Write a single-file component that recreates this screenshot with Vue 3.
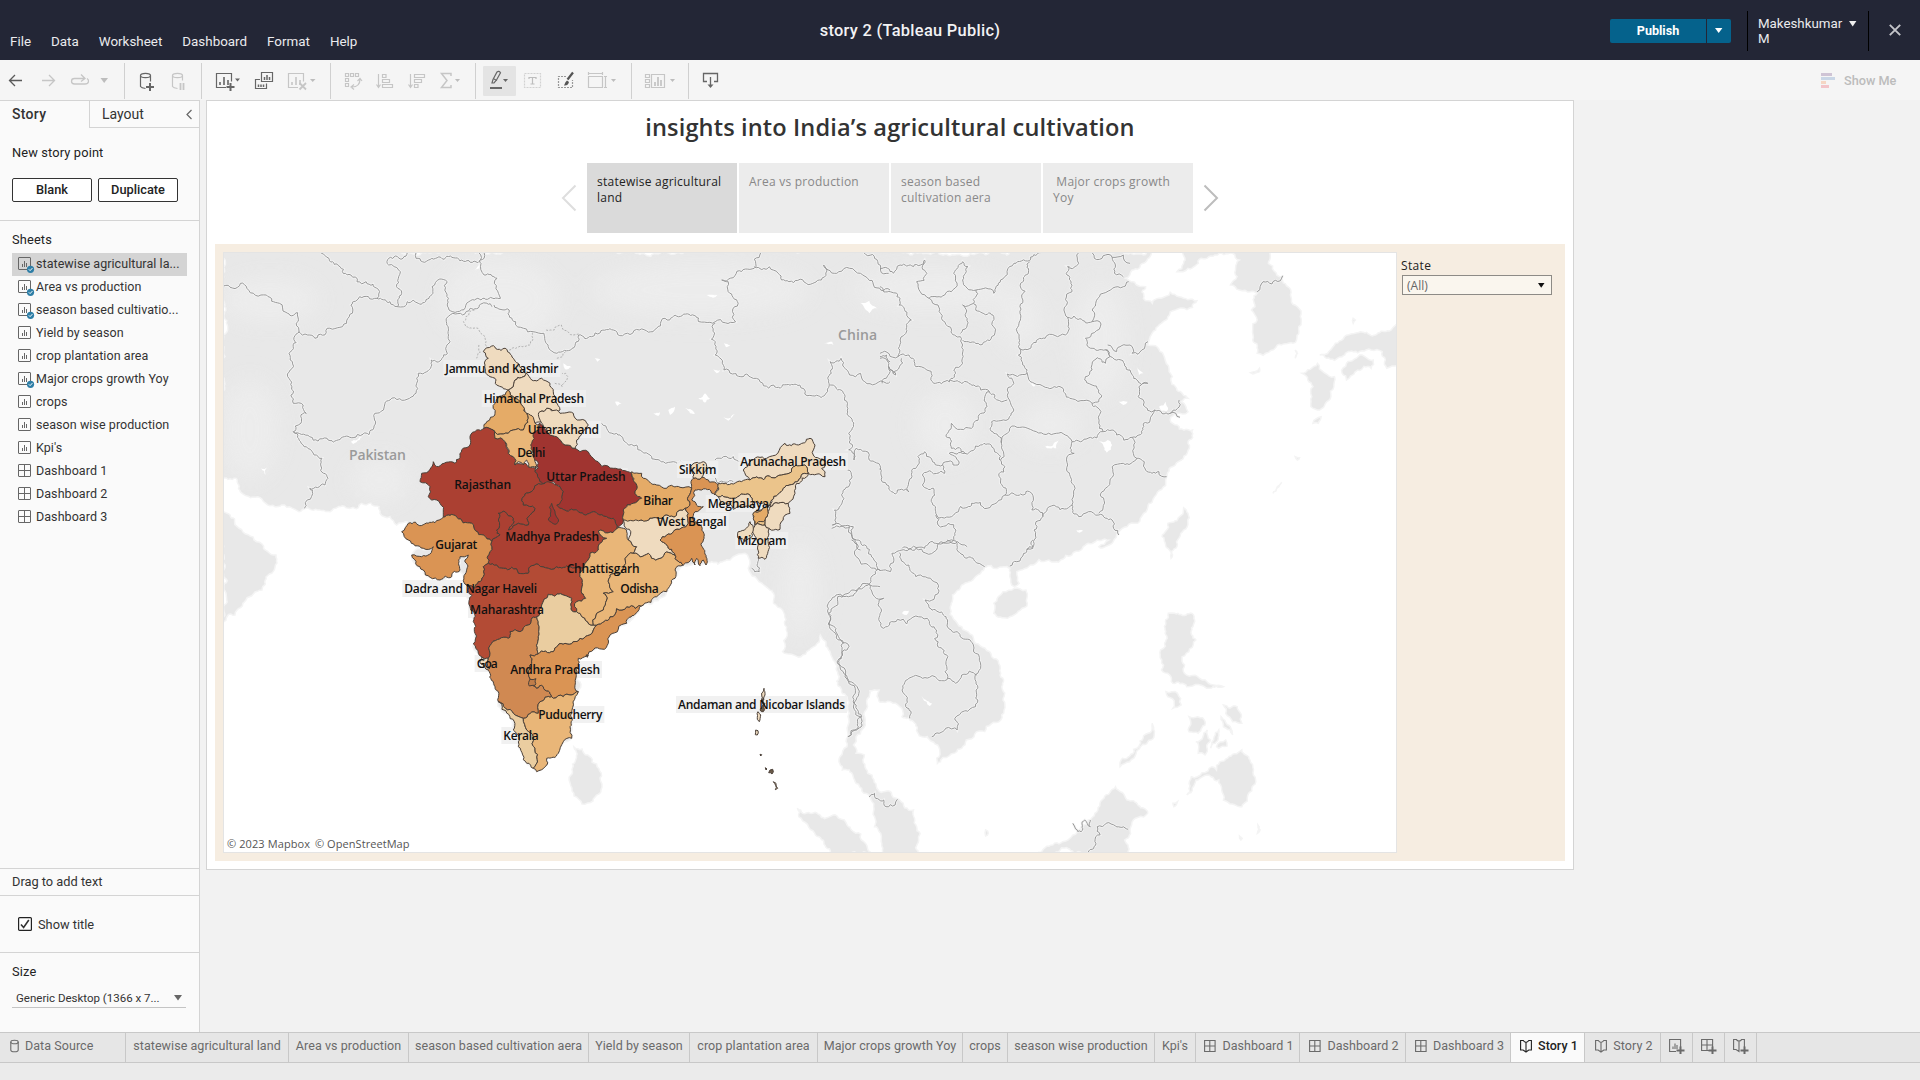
<script setup>
const menus = ['File', 'Data', 'Worksheet', 'Dashboard', 'Format', 'Help']

const sheets = [
  { name: 'statewise agricultural la...', used: true, selected: true },
  { name: 'Area vs production', used: true },
  { name: 'season based cultivatio...', used: true },
  { name: 'Yield by season' },
  { name: 'crop plantation area' },
  { name: 'Major crops growth Yoy', used: true },
  { name: 'crops' },
  { name: 'season wise production' },
  { name: "Kpi's" },
  { name: 'Dashboard 1', dash: true },
  { name: 'Dashboard 2', dash: true },
  { name: 'Dashboard 3', dash: true },
]

const points = [
  { text: 'statewise agricultural land', active: true },
  { text: 'Area vs production' },
  { text: 'season based cultivation aera' },
  { text: '\u00a0Major crops growth Yoy' },
]

const tabs = [
  { name: 'Data Source', icon: 'db', w: 126 },
  { name: 'statewise agricultural land', w: 163 },
  { name: 'Area vs production', w: 120 },
  { name: 'season based cultivation aera', w: 180 },
  { name: 'Yield by season', w: 101 },
  { name: 'crop plantation area', w: 128 },
  { name: 'Major crops growth Yoy', w: 145 },
  { name: 'crops', w: 45 },
  { name: 'season wise production', w: 147 },
  { name: "Kpi's", w: 41 },
  { name: 'Dashboard 1', icon: 'dash', w: 104 },
  { name: 'Dashboard 2', icon: 'dash', w: 106 },
  { name: 'Dashboard 3', icon: 'dash', w: 105 },
  { name: 'Story 1', icon: 'story', w: 74, active: true },
  { name: 'Story 2', icon: 'story', w: 76 },
  { name: '', icon: 'addsheet', w: 32 },
  { name: '', icon: 'adddash', w: 32 },
  { name: '', icon: 'addstory', w: 32 },
]

// Survey grids: origin and scale that turn traced points into map units.
const grids = {
  a: [380, 330, 1 / 3, 1 / 3],
  b: [210, 230, 1 / 2.306, 1 / 3],
  c: [880, 230, 1 / 2.24, 1 / 3],
  d: [700, 540, 1 / 2.178, 1 / 3],
  p: [0, 0, 1, 1],
}

// "b:1,2 3,4 c:5,6" switches grid at each prefix.
function parse(str) {
  let g = grids.p
  return str.trim().split(/\s+/).map((tok) => {
    if (tok[1] === ':') {
      g = grids[tok[0]]
      tok = tok.slice(2)
    }
    const [x, y] = tok.split(',').map(Number)
    return [g[0] + x * g[2], g[1] + y * g[3]]
  })
}

function noise(a, b) {
  const s = Math.sin(a[0] * 12.9898 + a[1] * 78.233 + b[0] * 37.719 + b[1] * 11.17) * 43758.5453
  return (s - Math.floor(s)) * 2 - 1
}

// Midpoint displacement; endpoints are ordered so neighbours share the same edge.
function split(a, b, amp, out) {
  const len = Math.hypot(b[0] - a[0], b[1] - a[1])
  if (len < 3.2) {
    out.push(b)
    return
  }
  const fwd = a[0] < b[0] || (a[0] === b[0] && a[1] < b[1])
  const [p, q] = fwd ? [a, b] : [b, a]
  const k = noise(p, q) * amp * Math.min(len, 16)
  const m = [
    (p[0] + q[0]) / 2 - ((q[1] - p[1]) / len) * k,
    (p[1] + q[1]) / 2 + ((q[0] - p[0]) / len) * k,
  ]
  split(a, m, amp, out)
  split(m, b, amp, out)
}

function line(str, closed = false, amp = 0.2) {
  const pts = parse(str)
  if (closed) pts.push(pts[0])
  const out = [pts[0]]
  for (let i = 1; i < pts.length; i++) split(pts[i - 1], pts[i], amp, out)
  return 'M' + out.map((p) => p[0].toFixed(1) + ' ' + p[1].toFixed(1)).join('L') + (closed ? 'Z' : '')
}

const land = [
  'p:222,250 1152,250 c:590,100 565,120 550,145 575,165 595,170 590,205 610,220 630,205 650,187 670,200 710,212 700,232 650,245 630,280 605,320 600,345 635,375 655,440 665,480 690,505 675,515 690,545 665,550 650,570 665,585 700,600 690,640 675,690 655,710 640,750 615,800 600,830 570,880 530,915 520,940 490,950 d:890,0 830,30 810,45 760,60 720,75 690,95 695,130 685,140 675,110 675,85 620,82 600,110 570,135 550,165 545,205 570,260 600,310 635,350 655,400 660,480 655,540 620,575 580,600 570,625 540,650 517,670 518,615 495,590 475,580 465,545 440,530 435,500 415,485 392,487 390,450 370,452 365,475 360,540 340,590 340,640 358,645 365,700 385,745 415,755 435,780 465,810 472,860 475,945 400,945 395,890 380,860 378,800 370,770 340,730 325,690 310,690 305,650 320,620 322,590 325,520 305,440 295,370 280,330 262,285 255,310 220,350 180,335 188,270 180,210 160,190 160,160 120,110 105,85 a:1110,700 1095,670 1060,680 1050,690 975,700 910,705 885,745 860,785 800,820 740,880 690,915 680,945 640,960 620,978 590,985 585,1030 595,1085 575,1150 575,1225 535,1270 500,1285 495,1310 470,1325 440,1300 415,1250 400,1200 355,1115 345,1070 320,1010 295,970 285,910 270,830 255,760 240,690 240,720 180,750 130,720 95,675 160,650 130,655 85,630 65,605 85,580 50,585 30,560 0,550 b:390,830 350,820 290,835 215,838 165,825 150,830 110,800 70,785 60,745 25,737',
  'p:222,512 230,515 243,532 262,544 276,555 277,563 266,577 262,590 246,600 235,615 222,622',
  'c:675,60 680,100 665,125 690,115 715,88 750,75 790,70 805,90 800,140 785,165 805,180 830,185 845,190 840,230 832,240 845,270 835,330 845,370 890,345 925,340 938,290 935,230 920,180 900,140 870,100 875,60',
  'c:945,430 980,400 1018,440 1010,500 985,540 965,530 970,470',
  'c:985,375 1020,340 1055,312 1110,315 1160,280 1160,405 1135,415 1125,365 1100,360 1060,365 1035,380 1000,385',
  'c:1045,400 1080,375 1105,390 1100,415 1070,420 1045,450 1035,430',
  'c:830,428 850,415 850,425 835,432',
  'c:680,833 690,850 680,900 665,950 652,985 645,955 632,920 645,880',
  'd:640,190 660,155 710,150 712,175 690,220 670,235 640,220',
  'd:1020,220 1075,225 1080,300 1050,350 1055,400 1100,420 1140,440 1110,445 1060,440 1030,430 1005,390 1003,330 1015,300',
  'd:1015,455 1040,460 1048,495 1030,505',
  'd:985,550 990,575 950,640 915,680 920,655 965,595',
  'd:1060,765 1070,710 1115,680 1125,690 1180,630 1198,660 1210,720 1195,760 1180,800 1140,780 1130,720 1095,710 1080,720',
  'd:1065,530 1100,545 1085,580 1065,575',
  'd:1105,570 1112,600 1100,645 1085,640 1080,605',
  'd:1140,495 1170,500 1180,550 1160,545 1145,520',
  'd:1135,530 1155,560 1160,585 1140,560',
  'd:1120,590 1130,570 1122,610 1112,625',
  'd:1125,620 1145,600 1148,618 1130,625',
  'd:725,945 790,905 830,860 860,820 880,775 905,740 930,780 975,820 940,855 925,900 930,945',
  'd:212,805 240,820 290,825 330,870 360,910 372,945 290,945 250,880 215,830',
  'p:574,747 582,749 592,762 600,778 601,790 593,801 582,804 574,796 571,775',
  'c:1060,265 1065,270 1060,280', 'c:930,360 935,370 930,385', 'c:880,790 900,757 890,770', 'c:930,680 940,683 935,690', 'c:970,580 988,560 982,580',
  'd:1215,855 1220,870 1214,880', 'd:622,870 628,880 622,888', 'd:1175,888 1181,895 1178,900', 'd:1030,790 1040,785 1032,800',
]

const lakes = [
  'a:955,205 975,190 990,205 975,218', 'a:865,240 885,230 870,255', 'a:1030,262 1065,252 1045,272', 'a:915,235 935,240 950,252 930,250',
  'a:1000,118 1020,120 1010,130', 'a:705,215 725,220 712,228', 'a:820,250 840,247 835,258', 'a:550,100 575,112 555,118',
  'b:1500,220 1520,212 1538,235 1520,250', 'b:1145,195 1170,195 1160,203', 'b:1185,340 1200,345 1190,352', 'b:118,715 132,712 128,735', 'b:325,635 352,620 345,630 330,642',
  'b:610,120 620,100 622,115', 'b:887,385 900,388 893,395', 'b:1415,340 1435,335 1438,345',
  'c:575,410 590,430 580,435', 'c:535,515 555,515 545,525', 'c:625,530 640,515 645,540 630,545', 'c:490,635 510,630 520,645 508,668', 'c:370,650 400,630 395,655 380,655', 'c:440,900 455,902 447,908', 'c:330,455 355,462 345,470',
  'd:482,462 505,490 500,498 485,475', 'd:440,220 455,212 450,225',
]

const borders = [
  'b:255,68 300,110 325,135 360,155 388,178 385,205',
  'b:31,168 70,160 85,175 130,195 160,220 175,247 202,248 205,300 182,370 185,420 192,520 215,525 222,550 192,605',
  'b:205,305 225,315 242,325 270,295 315,280 325,225 345,200 385,205 415,215 432,230 455,215 480,220 505,205 512,170 530,147 547,155 550,205 560,245 580,240 610,210 640,208 670,205 662,145 632,135 625,100 620,68',
  'b:432,230 442,190 430,170 435,120 412,105 412,85 445,85 455,68',
  'b:475,68 475,85 540,88 600,97 632,85 632,68',
  'b:192,605 230,620 270,625 330,623 375,600 380,550 400,540 415,510 460,505 475,490 480,430 500,425 510,390 535,385 545,350 550,315 545,275 560,250 600,235 650,230',
  'b:192,605 210,640 240,675 258,685 262,730 272,745 265,765 230,775 218,835',
  'b:655,225 690,240 705,275 745,305 770,310 780,350 800,370 835,355 850,315 880,320 900,308 930,300 945,317 990,300 1030,295 1060,270 1120,258 1165,275 1212,275 1205,245 1218,220 1195,185 1195,155 1180,150 1255,115 1270,68',
  'b:1255,110 1290,110 1310,130 1335,155 1375,160 1410,150 1415,105 1450,125 1475,115 1500,130 1530,165 1568,180',
  'b:1508,68 1540,95 1565,130',
  'b:1165,280 1165,375 1185,420 1205,432 1260,445 1300,465 1360,465 1395,498 1420,490 1428,465 1430,395 1455,385 1475,435 1500,430 1510,455 1560,460 1568,455',
  'b:1430,465 1455,480 1470,520 1480,600 1475,625 1485,690 1490,655 1520,690 1545,720',
  'b:1545,380 1560,375 1568,395',
  'a:665,280 710,310 740,340 770,345 810,375 850,395 880,395 915,410',
  'a:975,435 1015,460 1060,455', 'a:1005,390 1030,380 1085,395',
  'b:1470,720 1475,765 1440,840 1435,885 1475,890 1480,920 1500,960',
  'a:1355,595 1420,590 1430,630 1490,700 1500,720',
  'a:1500,770 1470,765 1430,780 1365,800 1345,850 1390,940 1380,1010 1415,1065 1445,1160 1405,1220',
  'a:1135,685 1138,725 1115,715',
  'c:0,115 30,130 45,105 75,110 100,90 105,130 82,155 90,185 110,205 145,195 160,185 165,130 185,95 197,110 185,150 215,180 255,190 270,150 300,100 335,92 360,68',
  'c:335,95 315,160 320,210 315,265 312,355 330,430 285,432 300,460 285,480 290,510 300,540 290,560 250,575 255,610 272,640 270,690',
  'c:110,205 130,225 145,275 180,320 185,345 185,400 165,420 155,455 210,465 245,485 285,510',
  'c:215,180 210,220 185,225 195,265 180,310', 'c:210,222 255,260 250,320 220,340 185,330',
  'c:0,170 45,205 70,270 45,330 40,380 0,370', 'c:40,380 65,375 80,410 105,420 120,460 155,455',
  'c:0,385 20,400 35,435 20,410 5,460', 'c:30,430 48,385',
  'c:312,355 370,325 415,315 420,262 412,240 430,185 420,110 445,100 445,68',
  'c:420,262 475,275 475,240 500,190 545,170 557,155', 'c:475,275 495,282 460,325 475,355 510,360',
  'c:475,68 480,85 520,82 525,130 545,140', 'c:520,82 545,75 560,100',
  'c:510,345 530,365 560,345 565,370 600,335',
  'c:505,360 515,380 505,400 480,390 475,420 460,440 475,465 490,480 490,515 475,520 425,505 410,475 370,472 330,430',
  'c:510,360 540,390 560,420 575,450 600,460 580,470 590,525 615,540 650,550 670,510', 'c:475,520 495,545 490,580 500,605 430,635 415,615 395,610 350,605 325,592 285,610 272,640',
  'c:500,605 520,600 530,615 565,622 580,615 590,580 605,570 615,540', 'c:565,622 575,685 545,700 520,710 510,770 495,800 490,850', 'c:575,685 595,720 625,725 642,740', 'c:650,550 672,562',
  'c:430,635 435,670 418,720 430,760 430,825 445,860 490,855 520,870 535,915',
  'c:430,825 395,830 365,860 340,840 335,785 280,795 270,760 280,710 270,690',
  'c:245,485 240,530 220,560 205,595 160,580 148,620 160,655 190,670 225,645 255,655 268,690',
  'c:190,670 155,670 175,705 140,705 115,685 100,665 85,705 70,745 65,785 35,792 15,765 0,715',
  'c:140,705 145,730 95,735 95,765 120,775 115,815 125,850 165,855 205,820 240,835 280,795',
  'c:125,855 130,885 170,900 165,920 125,940 100,955 50,955', 'c:365,860 345,900 345,930 330,960', 'c:150,930 195,950',
  'd:330,0 345,20 340,50 370,80 400,90 415,95 418,40 440,30 470,25 515,30 525,5 560,10 575,50 620,80',
  'd:725,0 725,25 705,40 690,65 675,78',
  'd:435,38 455,75 470,110 510,125 520,155 490,180 530,225 560,275 600,340 605,400 600,500 555,535 560,570 535,565 505,590',
  'd:385,90 370,130 330,150 300,170 280,220 325,320 308,380 335,430 340,480 350,530 322,590',
  'd:370,135 380,170 400,175 400,265 430,238 450,252 470,228 495,235 515,270 518,320 540,350 540,410 500,412 460,412 440,450 448,500 457,535',
  'd:540,415 557,430 570,405 603,405',
  'd:368,770 380,760 400,780 405,800 425,795 430,778', 'd:812,850 830,875 838,840 850,860 850,840', 'd:845,937 860,905 865,860 905,858 932,868',
  'c:845,185 858,155 897,152 902,137',
]

const disputed = [
  'b:610,240 590,260 590,290 620,300 635,330 640,350', 'b:690,360 720,350 745,325 745,305', 'b:620,345 615,385', 'b:775,300 810,285 850,312',
  'b:800,385 820,365', 'b:795,460 812,470 820,430 812,430',
]

const states = [
  ['#efdbbf', 'a:310,65 335,48 372,55 400,85 415,100 440,130 405,150 400,170 385,180 350,165 345,145 330,140 315,105 325,85'],
  ['#efdbbf', 'a:440,130 455,150 475,150 485,145 510,160 520,185 525,215 540,240 500,235 480,245 485,275 465,280 435,245 430,230 405,205 385,180 400,170 405,150'],
  ['#e5ab67', 'a:385,180 405,205 430,230 440,250 445,265 435,285 430,300 400,300 385,310 370,312 340,300 312,295 320,275 345,250 345,220 355,200 375,195'],
  ['#ab4032', 'a:312,295 340,300 345,325 375,335 385,370 400,380 405,405 430,400 445,410 470,410 465,425 480,455 500,450 500,455 460,480 430,500 430,525 465,535 445,560 445,585 415,580 385,600 400,565 375,545 355,550 355,570 350,600 360,615 335,635 310,615 275,580 230,562 190,562 170,510 145,500 150,470 120,455 125,430 160,395 175,410 225,400 245,360 270,345 290,300'],
  ['#a03430', 'a:480,280 490,290 505,310 530,320 555,345 585,355 640,385 700,415 755,430 770,465 765,490 785,505 760,520 730,540 730,570 710,597 700,565 660,555 640,545 595,545 580,540 540,535 515,520 530,495 545,500 540,470 520,455 480,455 465,425 475,400 460,380 455,320'],
  ['#e9b678', 'a:340,300 370,312 385,310 400,300 430,300 435,285 445,265 440,250 460,262 465,280 480,285 460,310 455,340 460,380 470,408 445,410 440,390 430,405 415,395 405,405 400,380 385,370 380,350 375,335 345,325'],
  ['#efdbbf', 'a:480,245 500,235 530,240 580,250 600,270 625,285 605,310 590,330 585,355 555,345 530,320 505,310 485,280'],
  ['#ab4032', 'a:520,460 540,470 545,500 530,525 540,535 580,540 595,545 640,545 660,555 700,565 710,597 655,603 680,625 655,660 630,670 615,700 610,715 560,708 540,712 505,715 475,703 450,710 445,730 415,730 395,712 370,715 350,705 325,700 330,665 335,635 360,615 350,600 355,570 355,550 375,545 400,565 385,600 415,580 445,585 445,560 465,535 430,525 430,500 460,480 500,455'],
  ['#a03430', 'a:515,520 505,570 525,583 535,568 520,535'],
  ['#da9454', 'a:85,580 165,578 190,562 230,562 275,580 310,615 335,635 330,665 325,700 310,710 310,740 295,755 285,775 260,765 255,690 265,675 240,680 240,720 215,740 180,750 130,720 95,675 125,680 160,650 130,655 85,630 65,605'],
  ['#b34b35', 'a:325,700 350,705 370,715 395,712 415,730 445,730 450,710 475,703 505,715 540,712 560,708 610,715 600,740 605,790 617,805 590,815 590,845 580,845 575,805 505,793 485,825 480,850 470,860 445,885 420,905 390,905 385,925 335,940 330,970 325,985 305,980 295,970 285,910 270,830 260,765 285,775 295,755 310,740 310,710'],
  ['#d08952', 'a:470,860 475,920 475,972 450,975 455,1000 445,1030 450,1065 490,1070 515,1100 480,1115 475,1150 430,1165 400,1150 355,1115 345,1070 330,1030 325,985 330,970 335,940 385,925 390,905 420,905 445,885'],
  ['#eacda0', 'a:505,793 575,805 580,845 600,850 640,885 650,885 640,900 600,925 555,940 520,965 475,972 475,920 470,860 480,850 485,825'],
  ['#da9454', 'a:450,975 475,972 520,965 555,940 600,925 640,900 650,885 690,860 740,830 790,825 740,880 690,915 685,940 640,960 620,978 595,985 588,1030 595,1085 550,1100 520,1105 515,1100 490,1070 450,1065 445,1030 455,1000'],
  ['#e9b678', 'a:655,603 710,597 730,595 745,630 770,650 760,670 735,685 730,715 690,735 685,755 700,785 670,790 680,810 670,840 640,885 600,850 590,845 590,815 617,805 605,790 600,740 610,715 615,700 630,670 655,660 680,625'],
  ['#e9b678', 'a:760,670 805,670 815,685 840,685 860,665 885,675 910,705 885,720 885,745 860,785 830,800 790,825 740,830 690,860 650,885 640,885 670,840 680,810 670,790 700,785 685,755 690,735 730,715 735,685'],
  ['#efdbbf', 'a:730,570 800,572 845,565 885,560 900,540 915,535 925,550 925,580 880,605 840,630 860,645 885,675 860,665 840,685 815,685 805,670 760,670 770,650 745,630'],
  ['#e5ab67', 'a:755,425 785,430 790,445 830,465 860,475 900,472 935,475 925,500 930,520 915,535 900,540 885,560 845,565 800,572 735,570 730,570 730,540 760,520 785,505 765,490 770,465'],
  ['#da9454', 'a:935,465 940,445 965,442 1015,465 1005,495 965,480 945,480 935,510 970,530 945,545 940,570 965,590 970,630 978,705 970,690 960,707 950,685 945,705 935,685 910,705 885,675 860,645 840,630 880,605 925,580 925,550 915,535 930,520 925,500 935,475'],
  ['#efdbbf', 'a:935,405 970,395 970,435 965,442 940,445'],
  ['#efdbbf', 'a:1090,420 1110,395 1160,385 1215,340 1255,345 1290,325 1305,345 1300,375 1335,390 1325,415 1335,440 1285,430 1275,405 1240,410 1190,440 1110,450'],
  ['#ebc48b', 'a:1015,460 1060,462 1110,450 1190,440 1240,410 1275,405 1285,430 1250,455 1210,475 1175,510 1165,550 1155,585 1125,585 1120,560 1125,545 1165,530 1120,515 1110,495 1060,505 1015,500 1005,490'],
  ['#e5ab67', 'a:1125,545 1170,525 1165,550 1150,575 1125,585 1120,565'],
  ['#efdbbf', 'a:1285,430 1250,460 1245,490 1225,520 1195,520 1170,530 1175,510 1210,475 1250,455'],
  ['#efdbbf', 'a:1015,500 1060,505 1110,495 1120,515 1120,535 1060,538 1020,525'],
  ['#efdbbf', 'a:1170,530 1195,520 1225,520 1230,550 1200,598 1155,585 1165,550'],
  ['#efdbbf', 'a:1125,585 1155,585 1168,595 1165,640 1155,688 1135,685 1135,640 1120,610'],
  ['#efdbbf', 'a:1075,605 1110,575 1120,600 1095,635 1075,625'],
  ['#efdbbf', 'a:305,980 325,985 330,1015 318,1018'],
  ['#eacda0', 'a:355,1115 400,1150 430,1165 440,1200 460,1220 465,1260 460,1315 440,1300 415,1250 400,1200'],
  ['#e9b678', 'a:430,1165 475,1150 480,1115 515,1100 520,1105 550,1100 595,1085 575,1150 570,1190 575,1225 550,1235 535,1270 500,1285 495,1310 470,1325 460,1315 465,1260 460,1220 440,1200'],
  ['#efdbbf', 'a:1152,1075 1155,1095 1148,1120 1145,1095'],
  ['#6b5a48', 'a:1146,1105 1155,1120 1150,1145 1140,1140'],
  ['#efdbbf', 'a:1134,1145 1142,1155 1138,1175 1132,1168'],
  ['#efdbbf', 'a:1127,1200 1134,1202 1132,1215 1126,1214'],
  ['#4a4a4a', 'a:1140,1273 1145,1274 1142,1278'],
  ['#4a4a4a', 'a:1156,1313 1161,1317 1158,1320'],
  ['#6b5a48', 'a:1166,1328 1178,1318 1176,1332'],
  ['#efdbbf', 'a:1180,1355 1188,1360 1193,1375 1186,1379'],
  ['#4a4a4a', 'a:618,975 625,975 622,982'],
  ['#c07d49', 'a:450,1048 468,1046 465,1066 448,1068'],
]

// Label text, left edge, right edge, vertical centre (grid a).
const labels = [
  ['Jammu and Kashmir', 196, 535, 117], ['Himachal Pradesh', 311, 612, 207], ['Uttarakhand', 443, 657, 300],
  ['Delhi', 412, 496, 369], ['Uttar Pradesh', 499, 737, 441], ['Rajasthan', 223, 393, 465], ['Sikkim', 897, 1009, 420],
  ['Arunachal Pradesh', 1081, 1398, 396], ['Bihar', 790, 879, 513], ['Meghalaya', 983, 1167, 522], ['West Bengal', 831, 1040, 576],
  ['Mizoram', 1072, 1219, 633], ['Madhya Pradesh', 376, 657, 621], ['Gujarat', 166, 292, 645], ['Chhattisgarh', 560, 779, 717],
  ['Dadra and Nagar Haveli', 73, 471, 777], ['Odisha', 721, 836, 777], ['Maharashtra', 270, 492, 840], ['Goa', 290, 353, 1002],
  ['Andhra Pradesh', 391, 660, 1020], ['Puducherry', 475, 667, 1155], ['Kerala', 370, 476, 1218], ['Andaman and Nicobar Islands', 894, 1395, 1125],
].map(([t, l, r, y]) => ({ t, x: 380 + l / 3, w: (r - l) / 3, y: 330 + y / 3 }))

const landPath = land.map((s) => line(s, true, 0.22)).join('')
const lakePath = lakes.map((s) => line(s, true, 0.2)).join('')
const borderPath = borders.map((s) => line(s, false, 0.28)).join('')
const disputedPath = disputed.map((s) => line(s, false, 0.26)).join('')
const statePaths = states.map(([fill, s]) => ({ fill, d: line(s, true, 0.24) }))
</script>

<template>
  <div class="app">
    <header class="top">
      <nav class="menu">
        <span v-for="m in menus" :key="m">{{ m }}</span>
      </nav>
      <div class="doc-title">story 2 (Tableau Public)</div>
      <div class="account">
        <div class="publish"><b>Publish</b><i><svg width="8" height="6"><path d="M0 0h7.4L3.7 5z" fill="#fff" /></svg></i></div>
        <div class="user">
          <span>Makeshkumar<br>M</span>
          <svg width="8" height="6"><path d="M0 0h7.4L3.7 5.4z" fill="#eee" /></svg>
        </div>
        <svg class="close" width="12" height="12"><path d="M.8.8l10.4 10.4M11.2.8L.8 11.2" stroke="#c4c5ca" stroke-width="1.9" /></svg>
      </div>
    </header>

    <div class="toolbar">
      <svg viewBox="0 60 124 40" width="124" height="40" fill="none">
        <path d="M22 80.500H9.500M15 75l-5.500 5.500L15 86" stroke="#5a5a5a" stroke-width="1.300" />
        <path d="M42 80.500h12.500M49 75l5.500 5.500L49 86" stroke="#c6c6c6" stroke-width="1.300" />
        <path d="M84 78.500H74.500c-4 0-4 5.500 0 5.500H85c4 0 4.500-4 2-5.500M81 74.500l4 4-4 3" stroke="#c6c6c6" stroke-width="1.300" />
        <path d="M100.500 78h7.500l-3.800 5z" fill="#bdbdbd" />
      </svg>
      <i class="sep" />
      <svg viewBox="125 60 76 40" width="76" height="40" fill="none" stroke-width="1.200">
        <g stroke="#666"><ellipse cx="145.500" cy="75.500" rx="5" ry="2.200" /><path d="M140.500 75.500v11q1 1.500 5 2M150.500 75.500v6" /><path d="M146 87h8M150 83v8" stroke-width="2" /></g>
        <g stroke="#c6c6c6"><ellipse cx="177.500" cy="75.500" rx="5" ry="2.200" /><path d="M172.500 75.500v11q1 1.500 5 2M182.500 75.500v5" /><path d="M180.500 83v7M183.500 83v7" stroke-width="1.800" /></g>
      </svg>
      <i class="sep" />
      <svg viewBox="202 60 128 40" width="128" height="40" fill="none" stroke-width="1.200">
        <g stroke="#666"><path d="M226 87.500h-9.500v-14h15v8" /><path d="M220 85v-3M224 85v-8M228 85v-5" stroke-width="1.600" /><path d="M226.500 87h8M230.500 83v8" stroke-width="2" /></g>
        <path d="M235 78.500h5l-2.500 3z" fill="#666" />
        <g stroke="#666"><path d="M261.500 72.500h11v9h-11zM260 79.500h-4.500v9h11v-5" /><path d="M264.500 80v-3M267 80v-5M269.500 80v-3M258.500 87v-2.500M261 87v-2.500M263.500 87v-2.500" stroke-width="1.500" /></g>
        <g stroke="#c6c6c6"><path d="M298 87.500h-9.500v-14h15v8" /><path d="M292 85v-3M296 85v-8M300 85v-5" stroke-width="1.600" /><path d="M299.500 83l6.500 6.500M306 83l-6.500 6.500" stroke-width="1.800" /></g>
        <path d="M310 79h5.500l-2.800 3z" fill="#bdbdbd" />
      </svg>
      <i class="sep" />
      <svg viewBox="331 60 144 40" width="144" height="40" fill="none" stroke="#c6c6c6" stroke-width="1.200">
        <path d="M345.500 73.500h3v3h-3zM350.500 73.500h3v3h-3zM355.500 73.500h3v3h-3zM345.500 78.500h3v3h-3zM345.500 83.500h3v3h-3zM352 87c5 0 8-3 8-8M357.500 81l2.500-2.500 2 2.500M354 84.500l-3 2.500 3 2.500" />
        <path d="M378.500 74v13M376.500 84.500l2 3 2-3M382.500 74.500h3.500v3h-3.500zM382.500 79.500h7v3h-7zM382.500 84.500h10v3h-10z" />
        <path d="M410.500 74v13M408.500 84.500l2 3 2-3M414.500 74.500h10v3h-10zM414.500 79.500h7v3h-7zM414.500 84.500h3.500v3h-3.500z" />
        <path d="M451 76v-2.500h-9.500l5.500 7-5.500 7H451V85" stroke-width="1.500" />
        <path d="M455 79h5l-2.500 3z" fill="#bdbdbd" stroke="none" />
      </svg>
      <i class="sep" />
      <svg viewBox="476 60 155 40" width="155" height="40" fill="none" stroke-width="1.200">
        <rect x="483" y="66" width="33" height="30" rx="1" fill="#e4e4e4" />
        <path d="M492 83l1-3.500 4-7.500q2-1.500 3.500.8l-4 7.200-2.500 3zM494 79l3 1.500" stroke="#666" /><path d="M490 88h12" stroke="#666" stroke-width="2" />
        <path d="M503 79h5l-2.500 3z" fill="#666" />
        <path d="M524.500 73.500h16v14h-16z" stroke="#d2d2d2" stroke-dasharray="2 1" /><path d="M529 79v-1.500h7V79M532.500 77.500v6.500M530.500 84h4" stroke="#bdbdbd" />
        <path d="M566 76.500h-7.500v11h14V80" stroke="#999" stroke-dasharray="2 1" /><path d="M573 72.500l-5.500 7" stroke="#555" stroke-width="2.200" /><path d="M564 85.500q4 .5 5-3.500l-2-1.500q-1.500 1-3 5z" fill="#555" />
        <g stroke="#c6c6c6"><path d="M588.500 76.500h14v11h-14zM588.500 72v3M602.500 72v3M588.500 73.500h14M605.500 76v12M604 76.500h3M604 87.500h3" /></g>
        <path d="M611 79h5l-2.500 3z" fill="#bdbdbd" />
      </svg>
      <i class="sep" />
      <svg viewBox="632 60 56 40" width="56" height="40" fill="none" stroke="#c6c6c6" stroke-width="1.200">
        <path d="M645.500 74.500h4v3h-4zM645.500 79.500h4v3h-4zM645.500 84.500h4v3h-4zM651.500 74.500h13v13h-13z" /><path d="M655 86v-4M658 86v-9M661 86v-6" stroke-width="1.800" />
        <path d="M670 79h5l-2.500 3z" fill="#bdbdbd" stroke="none" />
      </svg>
      <i class="sep" />
      <svg viewBox="689 60 40 40" width="40" height="40" fill="none" stroke="#666" stroke-width="1.300">
        <path d="M707 81.500h-3.500v-8h14v8H714M710.500 77v9" /><path d="M707.500 84.500h6l-3 3.500z" fill="#666" stroke="none" />
      </svg>
      <div class="showme">
        <svg width="14" height="16"><path d="M0 0h11v3H0z" fill="#cfc4d5" /><path d="M0 4h14v3H0z" fill="#c9d6e6" /><path d="M0 8h5v3H0z" fill="#f5d6c4" /><path d="M0 12h8v3H0z" fill="#f2c4c9" /></svg>
        Show Me
      </div>
    </div>

    <div class="body">
      <aside class="side">
        <div class="side-tabs">
          <div class="on">Story</div>
          <div class="off">Layout<svg width="7" height="11"><path d="M5.500 1L1 5.500 5.500 10" fill="none" stroke="#666" stroke-width="1.200" /></svg></div>
        </div>
        <div class="new-point">
          <h4>New story point</h4>
          <div class="btns"><button>Blank</button><button>Duplicate</button></div>
        </div>
        <div class="sheets">
          <h4>Sheets</h4>
          <div v-for="s in sheets" :key="s.name" class="sheet" :class="{ selected: s.selected }">
            <svg width="18" height="18" fill="none" stroke="#666">
              <rect x=".5" y="2.500" width="12" height="12" rx=".5" />
              <path v-if="s.dash" d="M.5 8.500h12M6.500 2.500v12" />
              <path v-else d="M4.500 12V9M6.500 12V6M8.500 12V8" />
              <g v-if="s.used"><circle cx="12.500" cy="14.300" r="3.600" fill="#2e7ea6" stroke="none" /><path d="M10.800 14.300l1.300 1.300 2.300-2.500" stroke="#fff" /></g>
            </svg>
            <span>{{ s.name }}</span>
          </div>
        </div>
        <div class="drag">Drag to add text</div>
        <div class="show-title">
          <svg width="14" height="14"><rect x=".6" y=".6" width="12.800" height="12.800" rx="1" fill="#fff" stroke="#222" stroke-width="1.200" /><path d="M3 7.500l2.600 3L10.800 3" fill="none" stroke="#333" stroke-width="1.600" /></svg>
          Show title
        </div>
        <div class="size">
          <h4>Size</h4>
          <div class="size-select"><span>Generic Desktop (1366 x 7...</span><svg width="8" height="6"><path d="M0 0h8L4 5.500z" fill="#666" /></svg></div>
        </div>
      </aside>

      <main class="canvas">
        <h1>insights into India’s agricultural cultivation</h1>
        <div class="navigator">
          <svg width="16" height="28"><path d="M14.500 1.500L2 14l12.500 12.500" fill="none" stroke="#dedede" stroke-width="2" /></svg>
          <div class="points">
            <div v-for="p in points" :key="p.text" class="point" :class="{ active: p.active }">{{ p.text }}</div>
          </div>
          <svg width="16" height="28"><path d="M1.500 1.500L14 14 1.500 26.500" fill="none" stroke="#bdbdbd" stroke-width="2" /></svg>
        </div>
        <section class="dash">
          <svg class="map" viewBox="224 253 1172 599" width="1172" height="599">
            <rect x="224" y="253" width="1172" height="599" fill="#fff" />
            <path :d="landPath" fill="#e8e8e8" stroke="#f4f4f4" stroke-width="1.500" />
            <defs>
              <clipPath id="shore"><path :d="landPath" /></clipPath>
              <filter id="soft" x="-30%" y="-30%" width="160%" height="160%"><feGaussianBlur stdDeviation="12" /></filter>
            </defs>
            <g clip-path="url(#shore)" fill="#eee" opacity=".8">
              <g filter="url(#soft)">
                <ellipse cx="270" cy="300" rx="50" ry="22" /><ellipse cx="500" cy="300" rx="60" ry="40" /><ellipse cx="250" cy="430" rx="28" ry="50" />
                <ellipse cx="700" cy="290" rx="110" ry="26" /><ellipse cx="945" cy="425" rx="30" ry="35" /><ellipse cx="1050" cy="425" rx="32" ry="22" />
                <ellipse cx="800" cy="590" rx="18" ry="50" /><ellipse cx="1020" cy="320" rx="20" ry="30" /><ellipse cx="1100" cy="340" rx="26" ry="60" />
                <ellipse cx="380" cy="480" rx="30" ry="22" /><ellipse cx="930" cy="290" rx="80" ry="20" />
              </g>
            </g>
            <path :d="lakePath" fill="#fff" />
            <path :d="borderPath" fill="none" stroke="#f4f4f4" stroke-width="2.500" />
            <path :d="borderPath" fill="none" stroke="#939393" stroke-width=".95" />
            <path :d="disputedPath" fill="none" stroke="#aaa" stroke-width=".9" stroke-dasharray="2 1.500" />
            <g class="country"><text x="838" y="339.500" textLength="39">China</text><text x="349" y="460" textLength="57">Pakistan</text></g>
            <rect v-for="l in labels" :key="'r' + l.t" :x="l.x - 2" :y="l.y - 9" :width="l.w + 4" height="17" fill="#efefef" opacity=".9" />
            <path v-for="(s, i) in statePaths" :key="i" :d="s.d" :fill="s.fill" stroke="#4b4038" stroke-width="1" stroke-linejoin="round" />
            <g class="labels"><text v-for="l in labels" :key="l.t" :x="l.x" :y="l.y + 4.300" :textLength="l.w">{{ l.t }}</text></g>
            <g class="credit"><text x="227" y="848" textLength="83">© 2023 Mapbox</text><text x="315" y="848" textLength="94.500">© OpenStreetMap</text></g>
          </svg>
          <div class="filter">
            <label>State</label>
            <div class="filter-select"><span>(All)</span><svg width="7" height="5"><path d="M0 0h6.500L3.200 4.800z" fill="#111" /></svg></div>
          </div>
        </section>
      </main>
    </div>

    <footer class="tabs">
      <div v-for="(t, i) in tabs" :key="i" class="tab" :class="{ active: t.active, source: t.icon === 'db', 'with-icon': t.icon && t.name }" :style="{ width: t.w + 'px' }">
        <svg v-if="t.icon" :width="t.icon === 'db' ? 9 : t.name ? 12 : 17" height="16" fill="none" stroke="currentColor" stroke-width="1.100">
          <g v-if="t.icon === 'db'"><ellipse cx="4.500" cy="4" rx="3.700" ry="1.800" /><path d="M.8 4v8c0 2.400 7.400 2.400 7.400 0V4" /></g>
          <path v-if="t.icon === 'dash'" d="M.6 2.500h10.500v11H.6zM.6 8h10.500M5.800 2.500v11" />
          <path v-if="t.icon === 'story'" d="M6 4.500v9.500M6 4.500Q4 3.800 3.300 2.500H.6v9.500h2.500L6 14l2.800-2h2.600V2.500H8.800Q8 3.800 6 4.500z" />
          <path v-if="t.icon === 'addsheet'" d="M8 13.500H1.600v-12h11V9M5 11V8.500M7 11V5.500M9 11V7" />
          <path v-if="t.icon === 'adddash'" d="M9 12.500H1.600v-11h11V9M1.600 7h11M7 1.500v11" />
          <path v-if="t.icon === 'addstory'" d="M7 3v10.500L4 11.500H1.600v-10h2.800Q5 3 7 3q2 0 2.600-1.500h2.800V9" />
          <path v-if="!t.name" d="M8.500 12.500h8M12.500 8.500v8" stroke-width="2" />
        </svg>
        <span v-if="t.name">{{ t.name }}</span>
      </div>
    </footer>
    <div class="status" />
  </div>
</template>

<style>
body { margin: 0; background: #f2f2f2; }
</style>

<style scoped>
* { box-sizing: border-box; }
.app { width: 1920px; height: 1080px; display: flex; flex-direction: column; overflow: hidden; background: #f2f2f2; color: #333; font: 12.8px Roboto, "Liberation Sans", sans-serif; }
h1, h4 { margin: 0; font-weight: 400; }
svg { flex: none; }

.top { height: 60px; flex: none; background: #232636; color: #ebebee; display: grid; grid-template-columns: 720px 380px 1fr; }
.menu { display: flex; gap: 20px; padding: 33px 0 0 10px; font-size: 13.4px; line-height: 17px; }
.doc-title { text-align: center; font-size: 16.4px; font-weight: 500; line-height: 61px; letter-spacing: .3px; color: #f2f2f4; }
.account { display: flex; align-items: center; justify-content: flex-end; padding-right: 19px; }
.publish { display: flex; gap: 1px; color: #fff; height: 24px; font-size: 12.6px; margin-right: 16px; }
.publish b { width: 96px; background: #05628c; border-radius: 2px 0 0 2px; text-align: center; line-height: 24px; font-weight: 700; }
.publish i { width: 24px; background: #05628c; border-radius: 0 2px 2px 0; display: flex; align-items: center; justify-content: center; }
.user { width: 122px; height: 40px; border-left: 1px solid #000; border-right: 1px solid #000; padding: 5px 0 0 10px; display: flex; gap: 7px; font-size: 13.3px; line-height: 15px; }
.user svg { margin-top: 5px; }
.close { margin-left: 20px; margin-top: -2px; }

.toolbar { height: 40px; flex: none; display: flex; background: #f5f5f5; }
.sep { width: 1px; height: 36px; margin-top: 3px; background: #d0d0d0; flex: none; }
.showme { margin-left: auto; width: 99px; display: flex; align-items: center; gap: 9px; color: #bcbcbc; font-size: 12.7px; padding-top: 1px; font-weight: 500; }

.body { height: 932px; flex: none; display: flex; }
.side { width: 200px; border-top: 1px solid #d4d4d4; border-right: 1px solid #d4d4d4; background: #fafafa; display: flex; flex-direction: column; }
.side-tabs { display: flex; height: 27px; font-size: 14px; line-height: 27px; }
.side-tabs .on { width: 89px; padding-left: 12px; font-weight: 500; letter-spacing: .3px; }
.side-tabs .off { flex: 1; border-left: 1px solid #d4d4d4; border-bottom: 1px solid #d4d4d4; padding: 0 6px 0 12px; display: flex; align-items: center; justify-content: space-between; }
.new-point { height: 93px; padding: 17px 12px 0; border-bottom: 1px solid #d4d4d4; }
h4 { font-size: 12.8px; line-height: 16px; letter-spacing: .15px; color: #222; }
.btns { display: flex; gap: 6px; margin-top: 17px; }
button { width: 80px; height: 24px; padding: 0 0 2px; background: #fff; border: 1px solid #333; border-radius: 2px; font: 500 12.8px Roboto, sans-serif; color: #222; }
.sheets { height: 647px; padding: 11px 12px 0; }
.sheets h4 { margin-bottom: 5px; }
.sheet { height: 23px; width: 175px; padding: 0 0 1px 6px; display: flex; align-items: center; font-size: 12.5px; letter-spacing: .06px; white-space: nowrap; }
.sheet span { padding-bottom: 1px; }
.sheet.selected { background: #d4d4d4; }
.drag { height: 28px; border-top: 1px solid #d4d4d4; border-bottom: 1px solid #d4d4d4; padding-left: 12px; line-height: 26px; }
.show-title { height: 57px; border-bottom: 1px solid #d4d4d4; padding-left: 18px; display: flex; align-items: center; gap: 6px; }
.size { padding: 11px 12px 0; }
.size-select { width: 174px; height: 20px; margin-top: 8px; border-bottom: 1px solid #c4c4c4; padding: 0 4px 0 4px; display: flex; align-items: center; justify-content: space-between; font-size: 11.5px; }

.canvas { width: 1368px; height: 770px; margin-left: 6px; background: #fff; border: 1px solid #d4d4d4; padding: 0 8px; font-family: "Open Sans", "Noto Sans", sans-serif; }
.canvas h1 { height: 62px; padding-top: 9px; text-align: center; font-size: 23.6px; line-height: 34px; font-weight: 600; letter-spacing: .12px; color: #333; white-space: nowrap; }
.navigator { display: flex; align-items: center; justify-content: center; gap: 10px; height: 70px; }
.points { display: flex; gap: 2px; }
.point { width: 150px; height: 70px; padding: 11px 10px; background: #ececec; color: #888; font-size: 12px; letter-spacing: .24px; line-height: 16px; }
.point.active { background: #dadada; color: #222; }
.dash { margin-top: 11px; height: 617px; background: #f6ede1; padding: 8px; display: flex; gap: 4px; }
.map { border: 1px solid #e4e4e4; box-sizing: content-box; display: block; }
.labels { font: 600 12px "Open Sans", sans-serif; fill: #111; }
.country { font: 600 14px "Open Sans", sans-serif; fill: #9a9a9a; }
.credit { font: 11px "Open Sans", sans-serif; fill: #555; }
.filter { width: 152px; padding-top: 6px; font-size: 12px; color: #222; }
.filter label { display: block; line-height: 16px; letter-spacing: .35px; }
.filter-select { width: 150px; height: 20px; margin: 1px 0 0 1px; border: 1px solid #8d8b86; background: #faf6ee; color: #666; padding: 0 6px 0 4px; display: flex; align-items: center; justify-content: space-between; }

.tabs { height: 31px; flex: none; display: flex; background: #e6e6e6; border-top: 1px solid #c8c8c8; border-bottom: 1px solid #c8c8c8; }
.tab { flex: none; border-right: 1px solid #c8c8c8; display: flex; justify-content: center; align-items: center; gap: 6px; padding-bottom: 4px; color: #6a6a6a; white-space: nowrap; font-size: 12.5px; letter-spacing: .06px; }
.tab.with-icon { padding-left: 3px; }
.tab.source { justify-content: flex-start; padding-left: 10px; }
.tab.active { background: #fafafa; color: #222; font-weight: 500; }
.status { flex: 1; background: #ebebeb; }
</style>
